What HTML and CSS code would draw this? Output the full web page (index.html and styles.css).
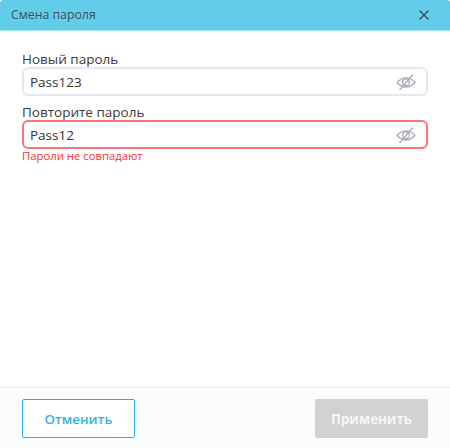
FILE: index.html
```html
<!DOCTYPE html>
<html lang="ru">
<head>
  <meta charset="UTF-8" />
  <title>Смена пароля</title>
  <link rel="stylesheet" href="styles.css">
</head>
<body>
  <div class="dialog">
    <div class="dialog-head">
      <span class="dialog-title">Смена пароля</span>
      <svg class="close-icon" width="12" height="12" viewBox="0 0 12 12">
        <path d="M1.5 1.5l9 9M10.5 1.5l-9 9" fill="none" stroke="#37474f" stroke-width="1.2"/>
      </svg>
    </div>

    <div class="dialog-body">
      <label class="field-label">Новый пароль</label>
      <div class="field">
        <input class="field-input" type="text" value="Pass123">
        <svg class="eye-icon" width="20" height="18" viewBox="0 0 20 18">
          <path d="M1 9.5C4 6 7 4.8 10 4.8s6 1.2 9 4.7c-3 3.3-6 4.5-9 4.5s-6-1.2-9-4.5z" fill="none" stroke="#a9adb3" stroke-width="1.3"/>
          <circle cx="10" cy="9.3" r="3.4" fill="none" stroke="#a9adb3" stroke-width="1.3"/>
          <path d="M3.5 17L17 1.5" fill="none" stroke="#a9adb3" stroke-width="1.3"/>
        </svg>
      </div>

      <label class="field-label">Повторите пароль</label>
      <div class="field field-error">
        <input class="field-input" type="text" value="Pass12">
        <svg class="eye-icon" width="20" height="18" viewBox="0 0 20 18">
          <path d="M1 9.5C4 6 7 4.8 10 4.8s6 1.2 9 4.7c-3 3.3-6 4.5-9 4.5s-6-1.2-9-4.5z" fill="none" stroke="#a9adb3" stroke-width="1.3"/>
          <circle cx="10" cy="9.3" r="3.4" fill="none" stroke="#a9adb3" stroke-width="1.3"/>
          <path d="M3.5 17L17 1.5" fill="none" stroke="#a9adb3" stroke-width="1.3"/>
        </svg>
      </div>
      <div class="error-text">Пароли не совпадают</div>
    </div>

    <div class="dialog-foot">
      <button class="btn btn-cancel" type="button">Отменить</button>
      <button class="btn btn-apply" type="button" disabled>Применить</button>
    </div>
  </div>
</body>
</html>
```

FILE: styles.css
```css
html, body {
  height: 100%;
}
body {
  margin: 0;
  font-family: 'Open Sans', 'Noto Sans', Arial, sans-serif;
  background: #fff;
  color: #333;
}
.dialog {
  height: 448px;
  display: flex;
  flex-direction: column;
}
.dialog-head {
  height: 31px;
  flex: none;
  box-sizing: border-box;
  padding: 0 20px 1px 11px;
  background: #62cde8;
  border-bottom: 1px solid #a5e4f3;
  display: flex;
  align-items: center;
  justify-content: space-between;
  border-radius: 3px 3px 0 0;
}
.dialog-title {
  font-size: 12.3px;
  color: #37545f;
}
.close-icon {
  display: block;
}
.dialog-body {
  flex: 1;
  padding: 21px 22px 0;
}
.field-label {
  display: block;
  font-size: 13.5px;
  line-height: 15px;
  color: #3a3a3a;
}
.field {
  height: 29px;
  box-sizing: border-box;
  margin-bottom: 9px;
  padding: 0 10px 0 6px;
  background: #fff;
  border: 2px solid #e7e8ef;
  border-radius: 6px;
  display: flex;
  align-items: center;
}
.field-error {
  border-color: #fb7478;
  margin-bottom: 0;
}
.field-input {
  flex: 1;
  min-width: 0;
  border: none;
  outline: none;
  padding: 0;
  font-family: inherit;
  font-size: 13.5px;
  color: #333;
  background: transparent;
}
.eye-icon {
  display: block;
}
.error-text {
  font-size: 11.3px;
  line-height: 14px;
  color: #fa3030;
}
.dialog-foot {
  height: 61px;
  flex: none;
  box-sizing: border-box;
  padding: 11px 22px 0;
  background: #fbfcfe;
  border-top: 1px solid #eeeef1;
  display: flex;
  justify-content: space-between;
  align-items: flex-start;
}
.btn {
  width: 113px;
  height: 39px;
  border-radius: 2px;
  font-family: inherit;
  font-size: 13.3px;
  padding: 0;
}
.btn-cancel {
  background: #fff;
  border: 1px solid #21b4dc;
  color: #2fb5df;
  font-weight: 600;
}
.btn-apply {
  background: #d2d2d2;
  border: none;
  color: #f5f5f5;
  font-weight: 700;
}
```
